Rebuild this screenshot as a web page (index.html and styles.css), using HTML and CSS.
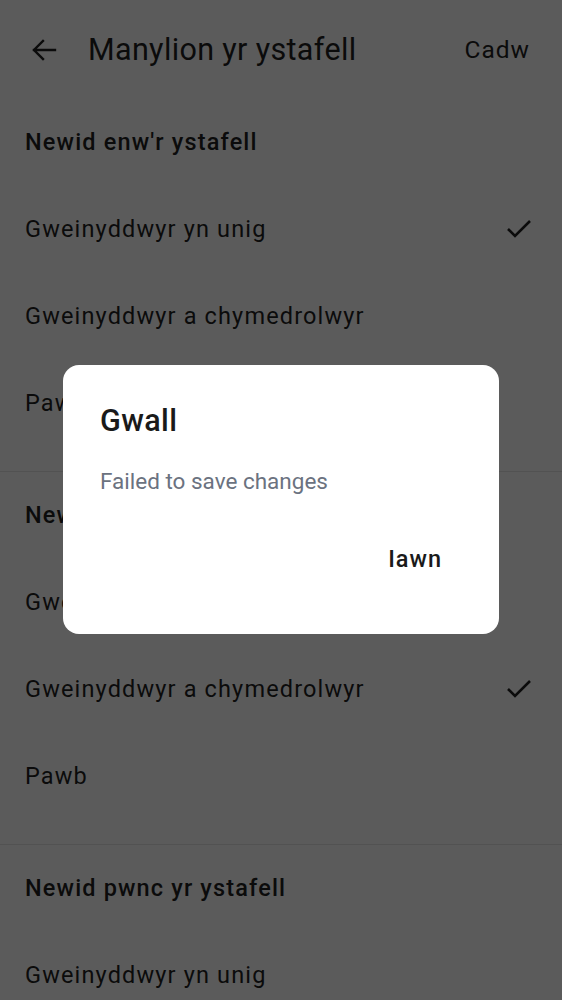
FILE: index.html
```html
<!DOCTYPE html>
<html lang="cy">
<head>
<meta charset="utf-8">
<title>Manylion yr ystafell</title>
<link rel="stylesheet" href="styles.css">
</head>
<body>
<div class="page">
  <header class="appbar">
    <svg class="back" width="26" height="24" viewBox="0 0 26 24"><path d="M24 12H3M12 3L3 12l9 9" fill="none" stroke="#1f1f1f" stroke-width="2.4" stroke-linecap="square"/></svg>
    <h1 class="title">Manylion yr ystafell</h1>
    <span class="save">Cadw</span>
  </header>

  <section class="section">
    <div class="sec-head">Newid enw'r ystafell</div>
    <div class="row"><span>Gweinyddwyr yn unig</span><svg class="check" width="26" height="20" viewBox="0 0 26 20"><path d="M2 10l7 7L24 2" fill="none" stroke="#1f1f1f" stroke-width="2.6"/></svg></div>
    <div class="row"><span>Gweinyddwyr a chymedrolwyr</span></div>
    <div class="row"><span>Pawb</span></div>
  </section>

  <section class="section">
    <div class="sec-head">Newid avatar yr ystafell</div>
    <div class="row"><span>Gweinyddwyr yn unig</span></div>
    <div class="row"><span>Gweinyddwyr a chymedrolwyr</span><svg class="check" width="26" height="20" viewBox="0 0 26 20"><path d="M2 10l7 7L24 2" fill="none" stroke="#1f1f1f" stroke-width="2.6"/></svg></div>
    <div class="row"><span>Pawb</span></div>
  </section>

  <section class="section last">
    <div class="sec-head">Newid pwnc yr ystafell</div>
    <div class="row"><span>Gweinyddwyr yn unig</span></div>
  </section>
</div>

<div class="scrim">
  <div class="dialog" role="alertdialog">
    <h2 class="d-title">Gwall</h2>
    <p class="d-body">Failed to save changes</p>
    <div class="d-actions"><button class="d-btn">Iawn</button></div>
  </div>
</div>
</body>
</html>
```

FILE: styles.css
```css
* { box-sizing: border-box; }
html, body { margin: 0; padding: 0; }
body {
  font-family: Roboto, "Liberation Sans", sans-serif;
  color: #1f1f1f;
  background: #fff;
  height: 1000px;
  overflow: hidden;
}
.page { width: 562px; }
.appbar {
  height: 99px;
  display: flex;
  align-items: center;
  padding: 0 32px 0 31px;
}
.back { flex: none; margin-right: 31px; margin-top: 1px; }
.title {
  flex: 1;
  margin: 0;
  font-size: 30.5px;
  font-weight: 400;
  letter-spacing: 0.35px;
  color: #1f1f1f;
}
.save {
  font-size: 24.5px;
  font-weight: 400;
  color: #1f1f1f;
  letter-spacing: 1px;
}
.section {
  border-bottom: 1px solid #e6e6e6;
  padding-bottom: 25px;
}
.section.last { border-bottom: 0; padding-bottom: 0; }
.sec-head {
  height: 86px;
  display: flex;
  align-items: center;
  padding: 0 25px;
  font-size: 23.5px;
  font-weight: 500;
  letter-spacing: 1.15px;
}
.row {
  height: 87px;
  display: flex;
  align-items: center;
  justify-content: space-between;
  padding: 0 30px 0 25px;
  font-size: 23.5px;
  letter-spacing: 1.15px;
}
.check { flex: none; }
.scrim {
  position: fixed;
  inset: 0;
  background: rgba(0, 0, 0, 0.643);
  display: flex;
  align-items: flex-start;
  justify-content: center;
  padding-top: 365px;
}
.dialog {
  width: 436px;
  height: 269px;
  background: #fff;
  border-radius: 16px;
  padding: 36px 37px 0 37px;
  display: flex;
  flex-direction: column;
}
.d-title {
  margin: 0;
  font-size: 30.5px;
  font-weight: 500;
  color: #1a1a1a;
  line-height: 40px;
  letter-spacing: 0.4px;
}
.d-body {
  margin: 25px 0 0;
  font-size: 22.5px;
  line-height: 30px;
  color: #6b7280;
  letter-spacing: 0;
}
.d-actions {
  display: flex;
  justify-content: flex-end;
  margin-top: 41px;
}
.d-btn {
  font-family: Roboto, "Liberation Sans", sans-serif;
  font-size: 23.5px;
  font-weight: 500;
  line-height: 28px;
  color: #1a1a1a;
  background: none;
  border: 0;
  padding: 8px 20px;
  letter-spacing: 1px;
}
```
